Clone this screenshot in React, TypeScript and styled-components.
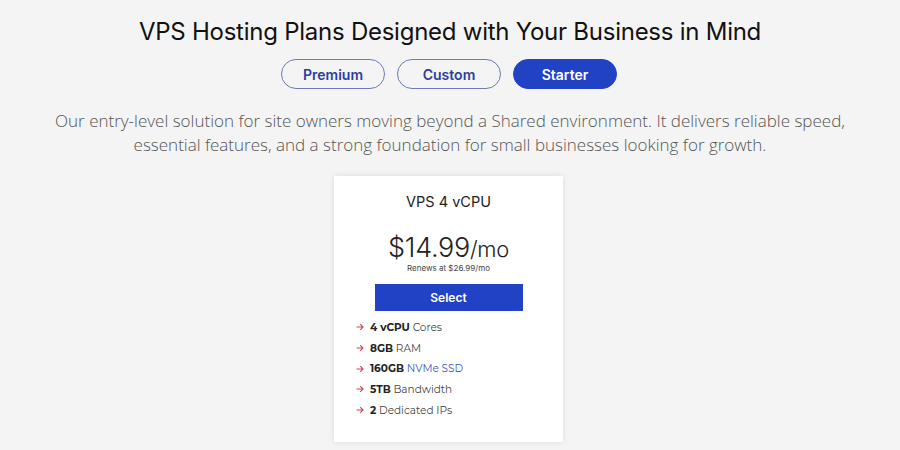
import React from "react";
import styled, { createGlobalStyle } from "styled-components";

const Global = createGlobalStyle`
  html, body { margin: 0; padding: 0; background: #f4f4f4; }
  body { font-family: "Inter", "Liberation Sans", sans-serif; }
`;

const Page = styled.div`
  width: 900px;
  height: 450px;
  display: flex;
  flex-direction: column;
  align-items: center;
  box-sizing: border-box;
  padding-top: 16px;
  overflow: hidden;
`;

const Title = styled.h1`
  margin: 0;
  font-family: "Inter", sans-serif;
  font-weight: 400;
  font-size: 24px;
  line-height: 32px;
  color: #111;
  letter-spacing: -0.25px;
`;

const Tabs = styled.div`
  display: flex;
  gap: 12px;
  margin-top: 11px;
  margin-right: 2px;
`;

const Tab = styled.button<{ $active?: boolean }>`
  width: 104px;
  height: 30px;
  border-radius: 15px;
  box-sizing: border-box;
  border: 1.5px solid ${(p) => (p.$active ? "#2142c4" : "#6b7bb8")};
  background: ${(p) => (p.$active ? "#2142c4" : "transparent")};
  color: ${(p) => (p.$active ? "#fff" : "#2a3f9c")};
  font-family: "Inter", sans-serif;
  font-weight: 600;
  font-size: 14px;
  padding: 0;
  cursor: pointer;
`;

const Lead = styled.p`
  margin: 20px 0 0;
  width: 860px;
  text-align: center;
  font-family: "Open Sans", sans-serif;
  font-weight: 300;
  font-size: 17px;
  line-height: 24px;
  color: #555;
`;

const Card = styled.div`
  margin-top: 19px;
  margin-right: 3px;
  width: 229px;
  height: 266px;
  background: #fff;
  box-shadow: 0 0 6px rgba(0, 0, 0, 0.1);
  display: flex;
  flex-direction: column;
  align-items: center;
  box-sizing: border-box;
  padding-top: 16px;
`;

const PlanName = styled.div`
  font-family: "Inter", sans-serif;
  font-size: 14.5px;
  color: #222;
  line-height: 20px;
`;

const Price = styled.div`
  margin-top: 22px;
  font-family: "Inter", sans-serif;
  font-weight: 300;
  font-size: 27px;
  line-height: 28px;
  color: #222;
  letter-spacing: -0.3px;
`;

const Per = styled.span`
  font-size: 22px;
`;

const Renews = styled.div`
  font-family: "Inter", sans-serif;
  font-size: 8px;
  line-height: 10px;
  color: #444;
`;

const Select = styled.button`
  margin-top: 11px;
  width: 148px;
  height: 27px;
  border: 0;
  background: #2142c4;
  color: #fff;
  font-family: "Inter", sans-serif;
  font-weight: 600;
  font-size: 12px;
  cursor: pointer;
`;

const Features = styled.ul`
  list-style: none;
  margin: 6px 0 0;
  padding: 0 0 0 22px;
  align-self: stretch;
  display: flex;
  flex-direction: column;
`;

const Feature = styled.li`
  display: flex;
  align-items: center;
  gap: 6px;
  height: 20.7px;
  font-family: "Montserrat", "Open Sans", sans-serif;
  font-size: 10.5px;
  color: #444;
`;

const Strong = styled.b`
  font-weight: 700;
  color: #222;
`;

const Link = styled.span`
  color: #3b5bbf;
`;

const Arrow = () => (
  <svg width="8" height="8" viewBox="0 0 8 8" fill="none" stroke="#c8485a" strokeWidth="1.1">
    <path d="M0.5 4 H7 M4.2 1.2 L7 4 L4.2 6.8" />
  </svg>
);

export default function App() {
  return (
    <>
      <Global />
      <Page>
        <Title>VPS Hosting Plans Designed with Your Business in Mind</Title>
        <Tabs>
          <Tab>Premium</Tab>
          <Tab>Custom</Tab>
          <Tab $active>Starter</Tab>
        </Tabs>
        <Lead>
          Our entry-level solution for site owners moving beyond a Shared environment. It delivers reliable speed,
          essential features, and a strong foundation for small businesses looking for growth.
        </Lead>
        <Card>
          <PlanName>VPS 4 vCPU</PlanName>
          <Price>
            $14.99<Per>/mo</Per>
          </Price>
          <Renews>Renews at $26.99/mo</Renews>
          <Select>Select</Select>
          <Features>
            <Feature>
              <Arrow />
              <span>
                <Strong>4 vCPU</Strong> Cores
              </span>
            </Feature>
            <Feature>
              <Arrow />
              <span>
                <Strong>8GB</Strong> RAM
              </span>
            </Feature>
            <Feature>
              <Arrow />
              <span>
                <Strong>160GB</Strong> <Link>NVMe SSD</Link>
              </span>
            </Feature>
            <Feature>
              <Arrow />
              <span>
                <Strong>5TB</Strong> Bandwidth
              </span>
            </Feature>
            <Feature>
              <Arrow />
              <span>
                <Strong>2</Strong> Dedicated IPs
              </span>
            </Feature>
          </Features>
        </Card>
      </Page>
    </>
  );
}
